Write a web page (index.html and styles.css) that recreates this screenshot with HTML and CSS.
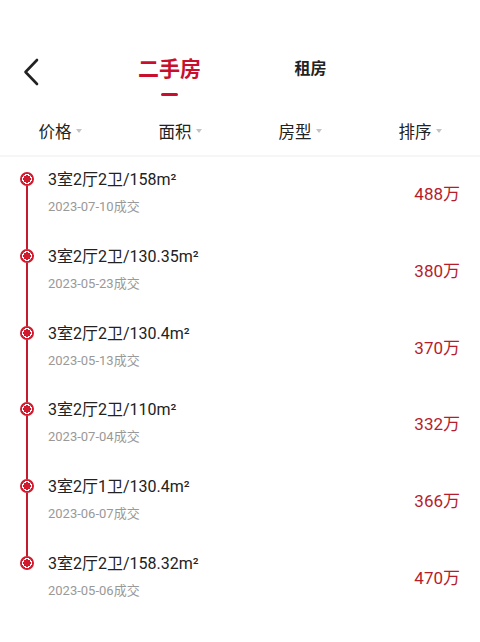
FILE: index.html
```html
<!DOCTYPE html>
<html lang="zh-CN">
<head>
	<meta charset="UTF-8">
	<title>成交记录</title>
	<link rel="stylesheet" href="styles.css">
</head>
<body>
	<div id="wrap">
		<div class="header">
			<a href="javascript:;" class="back">
				<svg width="18" height="28" viewBox="0 0 18 28">
					<path d="M15 2 L3.5 14 L15 26" fill="none" stroke="#222" stroke-width="2.6" stroke-linecap="round" stroke-linejoin="round"/>
				</svg>
			</a>
			<div class="tabs">
				<a href="javascript:;" class="tab tab-on"><span>二手房</span><i></i></a>
				<a href="javascript:;" class="tab"><span>租房</span><i></i></a>
			</div>
			<div></div>
		</div>

		<div class="filter">
			<a href="javascript:;">价格<i></i></a>
			<a href="javascript:;">面积<i></i></a>
			<a href="javascript:;">房型<i></i></a>
			<a href="javascript:;">排序<i></i></a>
		</div>

		<ul class="list">
			<li class="item">
				<div class="axis"><span class="seg"></span><span class="dot"></span><span class="seg"></span></div>
				<div class="info">
					<p class="title">3室2厅2卫/158m²</p>
					<p class="date">2023-07-10成交</p>
				</div>
				<div class="price">488万</div>
			</li>
			<li class="item">
				<div class="axis"><span class="seg"></span><span class="dot"></span><span class="seg"></span></div>
				<div class="info">
					<p class="title">3室2厅2卫/130.35m²</p>
					<p class="date">2023-05-23成交</p>
				</div>
				<div class="price">380万</div>
			</li>
			<li class="item">
				<div class="axis"><span class="seg"></span><span class="dot"></span><span class="seg"></span></div>
				<div class="info">
					<p class="title">3室2厅2卫/130.4m²</p>
					<p class="date">2023-05-13成交</p>
				</div>
				<div class="price">370万</div>
			</li>
			<li class="item">
				<div class="axis"><span class="seg"></span><span class="dot"></span><span class="seg"></span></div>
				<div class="info">
					<p class="title">3室2厅2卫/110m²</p>
					<p class="date">2023-07-04成交</p>
				</div>
				<div class="price">332万</div>
			</li>
			<li class="item">
				<div class="axis"><span class="seg"></span><span class="dot"></span><span class="seg"></span></div>
				<div class="info">
					<p class="title">3室2厅1卫/130.4m²</p>
					<p class="date">2023-06-07成交</p>
				</div>
				<div class="price">366万</div>
			</li>
			<li class="item">
				<div class="axis"><span class="seg"></span><span class="dot"></span><span class="seg"></span></div>
				<div class="info">
					<p class="title">3室2厅2卫/158.32m²</p>
					<p class="date">2023-05-06成交</p>
				</div>
				<div class="price">470万</div>
			</li>
		</ul>
	</div>
</body>
</html>
```

FILE: styles.css
```css
body, p, ul, li{
	margin: 0px;
	padding: 0px;
}
ul{
	list-style: none;
}
a{
	text-decoration: none;
	color: inherit;
}
body{
	background: #ffffff;
	font-family: Roboto, "Noto Sans CJK SC", sans-serif;
	color: #222222;
}
#wrap{
	width: 480px;
}

/* 顶部 */
.header{
	display: grid;
	grid-template-columns: 60px 1fr 60px;
	padding-top: 54px;
}
.back{
	display: block;
	padding: 4px 0 0 22px;
}
.back svg{
	display: block;
}
.tabs{
	display: flex;
	justify-content: center;
}
.tab{
	width: 141px;
	display: flex;
	flex-direction: column;
	align-items: center;
	font-size: 16px;
	font-weight: bold;
	color: #222222;
}
.tab span{
	height: 30px;
	line-height: 30px;
}
.tab i{
	display: block;
	width: 17px;
	height: 3px;
	margin-top: 9px;
	border-radius: 2px;
}
.tab-on{
	font-size: 21px;
	color: #c8102e;
}
.tab-on i{
	background: #c8102e;
}

/* 筛选 */
.filter{
	display: grid;
	grid-template-columns: repeat(4, 1fr);
	height: 49px;
	margin-top: 10px;
	border-bottom: 2px solid #f6f6f6;
}
.filter a{
	display: flex;
	align-items: center;
	justify-content: center;
	font-size: 16.5px;
	color: #222222;
}
.filter a i{
	width: 0;
	height: 0;
	margin-left: 4px;
	border-top: 4px solid #c4c4c4;
	border-left: 3.5px solid transparent;
	border-right: 3.5px solid transparent;
}

/* 列表 */
.item{
	display: flex;
	height: 76.8px;
	padding-right: 20px;
}
.axis{
	display: flex;
	flex-direction: column;
	align-items: center;
	width: 14px;
	margin-left: 20px;
	margin-right: 14px;
}
.seg{
	width: 2px;
	background: #c41a2e;
}
.seg:first-child{
	height: 15px;
}
.seg:last-child{
	flex: 1;
}
.item:first-child .seg:first-child,
.item:last-child .seg:last-child{
	background: transparent;
}
.dot{
	width: 14px;
	height: 14px;
	border-radius: 50%;
	background: radial-gradient(circle, #d11a2e 0 3.6px, #ffffff 3.8px 4.8px, #d11a2e 5px 7px);
}
.info{
	flex: 1;
	padding-top: 12px;
}
.title{
	font-size: 16px;
	line-height: 22px;
	color: #222222;
}
.date{
	margin-top: 7px;
	font-size: 13px;
	line-height: 18px;
	color: #999999;
}
.price{
	padding-top: 25px;
	font-size: 17px;
	line-height: 24px;
	color: #b51d2c;
}
```
